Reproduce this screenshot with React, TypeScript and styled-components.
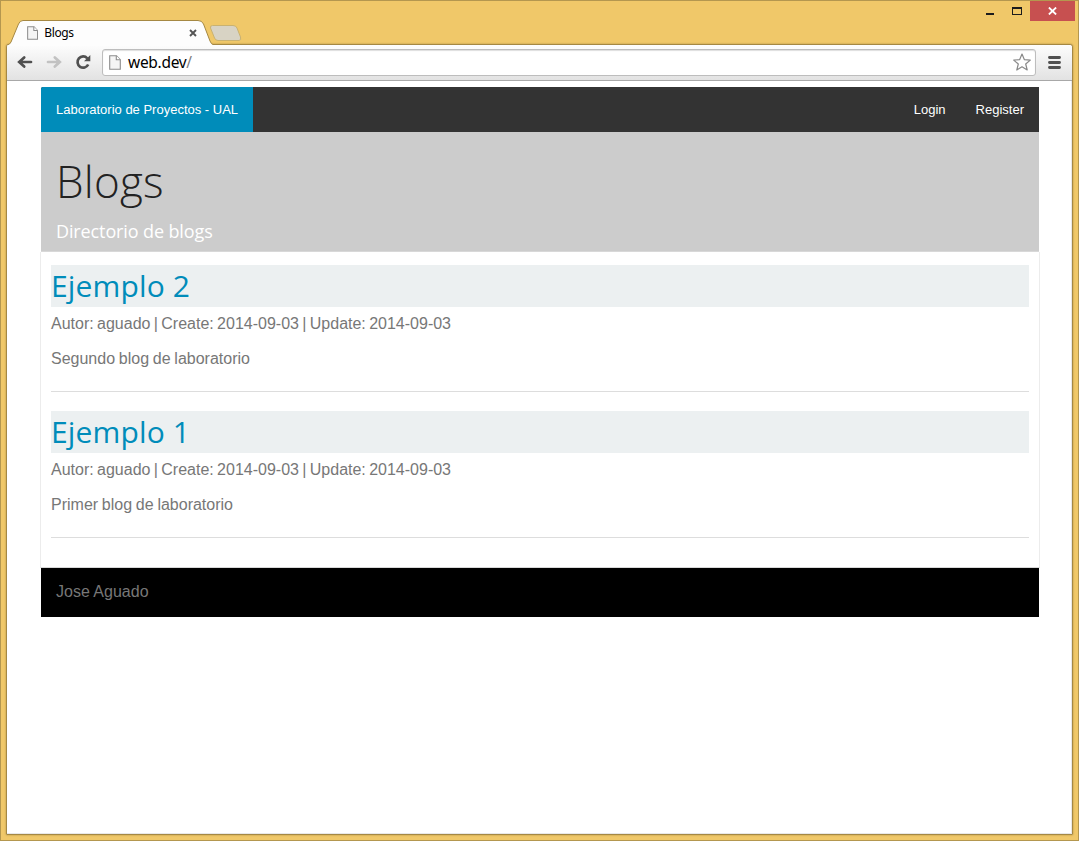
import React from 'react';
import styled, { createGlobalStyle } from 'styled-components';

const GlobalStyle = createGlobalStyle`
  * { box-sizing: border-box; }
  body { margin: 0; overflow: hidden; }
  h1, h2, p { margin: 0; }
`;

const Window = styled.div`
  width: 1079px;
  height: 841px;
  display: flex;
  flex-direction: column;
  padding: 0 5px 5px;
  border: 1px solid #b4974f;
  background: #f0c869;
  font-family: 'Liberation Sans', Arial, sans-serif;
`;

const TitleBar = styled.header`
  height: 43px;
  flex: none;
  display: flex;
  position: relative;
  z-index: 1;
`;

const Tab = styled.div`
  position: relative;
  width: 207px;
  height: 26px;
  margin: 19px 0 0 0;
  padding: 0 16px 0 21px;
  display: flex;
  align-items: center;
  font: 12px/24px 'Noto Sans', sans-serif;
  color: #000;
`;

const TabShape = styled.svg`
  position: absolute;
  left: 0;
  top: 0;
`;

const TabTitle = styled.span`
  position: relative;
  flex: 1;
  margin-left: 6px;
  height: 25px;
  letter-spacing: -0.35px;
`;

const Glyph = styled.svg`
  position: relative;
  display: block;
  flex: none;
`;

const NewTab = styled.svg`
  margin: 24px 0 0 -4px;
`;

const Controls = styled.div`
  display: flex;
  margin: 0 -2px 0 auto;
  height: 20px;
`;

const Control = styled.div<{ $close?: boolean; $width: number }>`
  width: ${(p) => p.$width}px;
  display: flex;
  align-items: center;
  justify-content: center;
  background: ${(p) => (p.$close ? '#c75050' : 'transparent')};
`;

const Browser = styled.div`
  flex: 1;
  display: flex;
  flex-direction: column;
  border: 1px solid #a58843;
  border-radius: 3px 3px 1px 1px;
  box-shadow: 0 0 2px #a58843;
  background: #fff;
`;

const Toolbar = styled.div`
  height: 36px;
  flex: none;
  display: flex;
  align-items: center;
  padding: 0 11px 1px 10px;
  border-radius: 3px 3px 0 0;
  border-bottom: 1px solid #a8a8a8;
  background: linear-gradient(#fdfdfd, #e2e2e2);
`;

const NavIcons = styled.div`
  width: 85px;
  display: flex;
  gap: 13px;
`;

const Address = styled.div`
  width: 934px;
  height: 27px;
  margin-top: 1px;
  display: flex;
  align-items: center;
  padding: 0 4px 1px 6px;
  border: 1px solid #bdbdbd;
  border-radius: 3px;
  box-shadow: inset 0 1px 1px #dedede;
  background: #fff;
`;

const Url = styled.span`
  flex: 1;
  margin-left: 7px;
  font: 15.5px/24px 'Noto Sans', sans-serif;
  letter-spacing: -0.3px;
  color: #000;

  span { color: #808080; }
`;

const MenuIcon = styled(Glyph)`
  margin-left: auto;
`;

const Viewport = styled.main`
  flex: 1;
  padding: 6px 32px 0 34px;
  border: solid #e8e8e8;
  border-width: 0 1px 1px 0;
`;

const NavBar = styled.nav`
  height: 45px;
  display: flex;
  justify-content: space-between;
  border-radius: 2px 0 0 0;
  overflow: hidden;
  background: #333;
  color: #fff;
  font-size: 13px;
  line-height: 45px;
`;

const Brand = styled.div`
  width: 212px;
  padding-left: 15px;
  background: #008cba;
  white-space: nowrap;
`;

const Links = styled.div`
  display: flex;
  gap: 30px;
  padding-right: 15px;
`;

const Hero = styled.section`
  height: 120px;
  padding: 18px 15px 0;
  border-bottom: 1px solid #d8d8d8;
  background: #ccc;
  font-family: 'Open Sans', sans-serif;
`;

const HeroTitle = styled.h1`
  font-size: 44px;
  line-height: 62px;
  font-weight: 300;
  letter-spacing: 0.2px;
  color: #222;
`;

const HeroText = styled.p`
  padding-top: 1px;
  font-size: 18px;
  letter-spacing: -0.12px;
  line-height: 36px;
  color: #fff;
`;

const Posts = styled.section`
  height: 316px;
  margin: 0 -1px;
  padding: 13px 10px 0;
  border: solid #ececec;
  border-width: 0 1px;
  border-bottom: 1px solid #d8d8d8;
`;

const Post = styled.article`
  height: 127px;
  margin-bottom: 19px;
  border-bottom: 1px solid #ddd;
  color: #777;
  font-size: 16px;
`;

const PostTitle = styled.h2`
  height: 42px;
  background: #ecf0f1;
  color: #008cba;
  font: 400 30px/42px 'Open Sans', sans-serif;
  letter-spacing: 0.15px;
`;

const PostLine = styled.p<{ $top: number; $gap: number }>`
  padding-top: ${(p) => p.$top}px;
  line-height: 26px;
  word-spacing: ${(p) => p.$gap}px;
`;

const Footer = styled.footer`
  height: 49px;
  padding-left: 15px;
  background: #000;
  color: #777;
  font-size: 16px;
  line-height: 47px;
`;

const PageIcon = ({ size = 14 }: { size?: number }) => (
  <Glyph width={size * 0.8} height={size} viewBox="0 0 12 15" preserveAspectRatio="none">
    <path d="M.7.7h6.8l3.8 4v9.6H.7z" fill="#f5f5f5" stroke="#8c8c8c" strokeWidth="1.1" />
    <path d="M7.3.7v4.1h4" fill="#fff" stroke="#8c8c8c" strokeWidth="1.1" />
  </Glyph>
);

const Arrow = ({ color, flip }: { color: string; flip?: boolean }) => (
  <Glyph width="16" height="16" viewBox="0 0 16 16">
    <path
      d="M7.200 3.500 2.200 8 7.200 12.500M2.500 8H14"
      transform={flip ? 'translate(16 0) scale(-1 1)' : undefined}
      fill="none"
      stroke={color}
      strokeWidth="2.700"
      strokeLinecap="round"
    />
  </Glyph>
);

const posts = [
  { title: 'Ejemplo 2', text: 'Segundo blog de laboratorio' },
  { title: 'Ejemplo 1', text: 'Primer blog de laboratorio' },
];

export default function App() {
  return (
    <>
      <GlobalStyle />
      <Window>
        <TitleBar>
          <Tab>
            <TabShape width="207" height="26" viewBox="0 0 207 26">
              <path d="M1 26V25Q4 24.500 5 22L12.500 4Q14 .5 17 .5H192Q196 .5 197.500 4L204 21Q205.500 24.500 207 24.500V26Z" fill="#fdfdfd" />
              <path d="M1 25Q4 24.500 5 22L12.500 4Q14 .5 17 .5H192Q196 .5 197.500 4L204 21Q205.500 24.500 207 24.500" fill="none" stroke="#a58843" />
            </TabShape>
            <PageIcon />
            <TabTitle>Blogs</TabTitle>
            <Glyph width="8" height="8" viewBox="0 0 8 8">
              <path d="m1 1 6 6M7 1 1 7" stroke="#555" strokeWidth="1.9" />
            </Glyph>
          </Tab>
          <NewTab width="33" height="16" viewBox="0 0 33 16">
            <path d="M3.500.5H24Q27 .5 28 3L31.500 12Q32.500 15.500 30 15.500H9Q6.500 15.500 5.500 13L1.500 3Q1 .5 3.500.5Z" fill="#d8d3c4" stroke="#c9b271" />
          </NewTab>
          <Controls>
            <Control $width={26}>
              <Glyph width="8" height="20"><path d="M0 12h8v2H0z" fill="#1c1c1c" /></Glyph>
            </Control>
            <Control $width={27}>
              <Glyph width="10" height="8"><path d="M0 0h10v8H0zM1 2v5h8V2z" fill="#1c1c1c" fillRule="evenodd" /></Glyph>
            </Control>
            <Control $width={45} $close>
              <Glyph width="9" height="8" viewBox="0 0 9 8"><path d="m.9.5 7.200 7M8.100.5.9 7.500" stroke="#fff" strokeWidth="1.8" /></Glyph>
            </Control>
          </Controls>
        </TitleBar>
        <Browser>
          <Toolbar>
            <NavIcons>
              <Arrow color="#505050" />
              <Arrow color="#c2c2c2" flip />
              <Glyph width="16" height="16" viewBox="0 0 16 16">
                <path d="M12.300 4.300A5.600 5.600 0 1 0 13.200 10.500" fill="none" stroke="#505050" strokeWidth="2.700" />
                <path d="M15.300 1v6.300H9z" fill="#505050" />
              </Glyph>
            </NavIcons>
            <Address>
              <PageIcon size={15} />
              <Url>web.dev<span>/</span></Url>
              <Glyph width="18" height="18" viewBox="0 0 18 18">
                <path d="m9 1 2.300 5.600 6 .5-4.600 3.900 1.500 6L9 13.800 3.800 17l1.500-6L.7 7.100l6-.5z" fill="#fff" stroke="#898989" strokeWidth="1.200" strokeLinejoin="round" />
              </Glyph>
            </Address>
            <MenuIcon width="13" height="13" viewBox="0 0 13 13">
              <path d="M1.500 1.500h10M1.500 6.500h10M1.500 11.500h10" stroke="#505050" strokeWidth="2.900" strokeLinecap="round" />
            </MenuIcon>
          </Toolbar>
          <Viewport>
            <NavBar>
              <Brand>Laboratorio de Proyectos - UAL</Brand>
              <Links><span>Login</span><span>Register</span></Links>
            </NavBar>
            <Hero>
              <HeroTitle>Blogs</HeroTitle>
              <HeroText>Directorio de blogs</HeroText>
            </Hero>
            <Posts>
              {posts.map((post) => (
                <Post key={post.title}>
                  <PostTitle>{post.title}</PostTitle>
                  <PostLine $top={4} $gap={-1.1}>Autor: aguado | Create: 2014-09-03 | Update: 2014-09-03</PostLine>
                  <PostLine $top={9} $gap={-0.7}>{post.text}</PostLine>
                </Post>
              ))}
            </Posts>
            <Footer>Jose Aguado</Footer>
          </Viewport>
        </Browser>
      </Window>
    </>
  );
}
